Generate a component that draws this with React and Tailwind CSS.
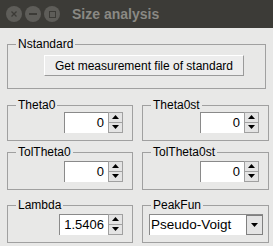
import React from "react";

const font = { fontFamily: '"Liberation Sans", Arial, sans-serif' };

const Arrow = ({ down }) => (
  <svg width="7" height="4" viewBox="0 0 7 4">
    <path d={down ? "M0 0h7L3.5 4z" : "M3.5 0L7 4H0z"} fill="#000" />
  </svg>
);

const Spinner = ({ value, w }) => (
  <div className="flex h-[21px]">
    <div
      className={`${w} h-full bg-white border-l border-t border-[#8a8a8a] flex items-center justify-end pr-[4px] text-[13px] leading-none text-black`}
    >
      {value}
    </div>
    <div className="w-[15px] h-full flex flex-col border border-[#a0a0a0] bg-[#e4e4e4]">
      <div className="flex-1 flex items-center justify-center border-b border-[#a0a0a0]">
        <Arrow />
      </div>
      <div className="flex-1 flex items-center justify-center">
        <Arrow down />
      </div>
    </div>
  </div>
);

const Group = ({ title, width, children, top = "mt-0" }) => (
  <fieldset className={`${width} border border-[#a0a0a0] pb-[7px] min-w-0`}>
    <legend className="ml-[8px] px-[2px] text-[12px] leading-[13px] text-black">
      {title}
    </legend>
    <div className={`${top} flex justify-end pr-[9px]`}>{children}</div>
  </fieldset>
);

export default function App() {
  return (
    <div className="w-[273px] h-[246px] bg-[#e8e8e7] overflow-hidden" style={font}>
      {/* title bar */}
      <div className="h-[28px] bg-[#3c3b37] flex items-center pl-[6px]">
        <div className="flex gap-[3px]">
          <div className="w-[16px] h-[16px] rounded-full bg-[#5e5d59] flex items-center justify-center">
            <svg width="6" height="6" viewBox="0 0 6 6">
              <path d="M0.5 0.5l5 5M5.5 0.5l-5 5" stroke="#3c3b37" strokeWidth="1.3" />
            </svg>
          </div>
          <div className="w-[16px] h-[16px] rounded-full bg-[#5e5d59] flex items-center justify-center">
            <div className="w-[8px] h-[2px] bg-[#3c3b37]" />
          </div>
          <div className="w-[16px] h-[16px] rounded-full bg-[#5e5d59] flex items-center justify-center">
            <div className="w-[7px] h-[7px] border-[1.5px] border-[#3c3b37]" />
          </div>
        </div>
        <span className="ml-[12px] text-[14px] font-bold text-[#8a8984] leading-none">
          Size analysis
        </span>
      </div>

      {/* body */}
      <div className="pl-[7px] pt-[10px] flex flex-col">
        <fieldset className="w-[259px] border border-[#a0a0a0] pb-[11px] min-w-0">
          <legend className="ml-[8px] px-[2px] text-[12px] leading-[13px] text-black">
            Nstandard
          </legend>
          <button className="mt-[4px] ml-[36px] w-[200px] h-[21px] bg-[#ededed] border border-t-white border-l-white border-r-[#9a9a9a] border-b-[#9a9a9a] text-[12px] text-black leading-none">
            Get measurement file of standard
          </button>
        </fieldset>

        <div className="mt-[10px] flex gap-[9px]">
          <Group title="Theta0" width="w-[126px]">
            <Spinner value="0" w="w-[44px]" />
          </Group>
          <Group title="Theta0st" width="w-[127px]">
            <Spinner value="0" w="w-[44px]" />
          </Group>
        </div>

        <div className="mt-[5px] flex gap-[9px]">
          <Group title="TolTheta0" width="w-[126px]" top="mt-[2px]">
            <Spinner value="0" w="w-[44px]" />
          </Group>
          <Group title="TolTheta0st" width="w-[127px]" top="mt-[2px]">
            <Spinner value="0" w="w-[44px]" />
          </Group>
        </div>

        <div className="mt-[9px] flex gap-[9px]">
          <Group title="Lambda" width="w-[126px]" top="mt-[2px]">
            <Spinner value="1.5406" w="w-[49px]" />
          </Group>
          <fieldset className="w-[127px] border border-[#a0a0a0] pb-[7px] min-w-0">
            <legend className="ml-[8px] px-[2px] text-[12px] leading-[13px] text-black">
              PeakFun
            </legend>
            <div className="mt-[2px] ml-[6px] w-[114px] h-[21px] flex bg-white border-l border-t border-[#8a8a8a]">
              <div className="flex-1 flex items-center pl-[1px] text-[13.5px] leading-none text-black">
                Pseudo-Voigt
              </div>
              <div className="w-[17px] h-full border border-[#808080] bg-[#e4e4e4] flex items-center justify-center">
                <Arrow down />
              </div>
            </div>
          </fieldset>
        </div>
      </div>
    </div>
  );
}
